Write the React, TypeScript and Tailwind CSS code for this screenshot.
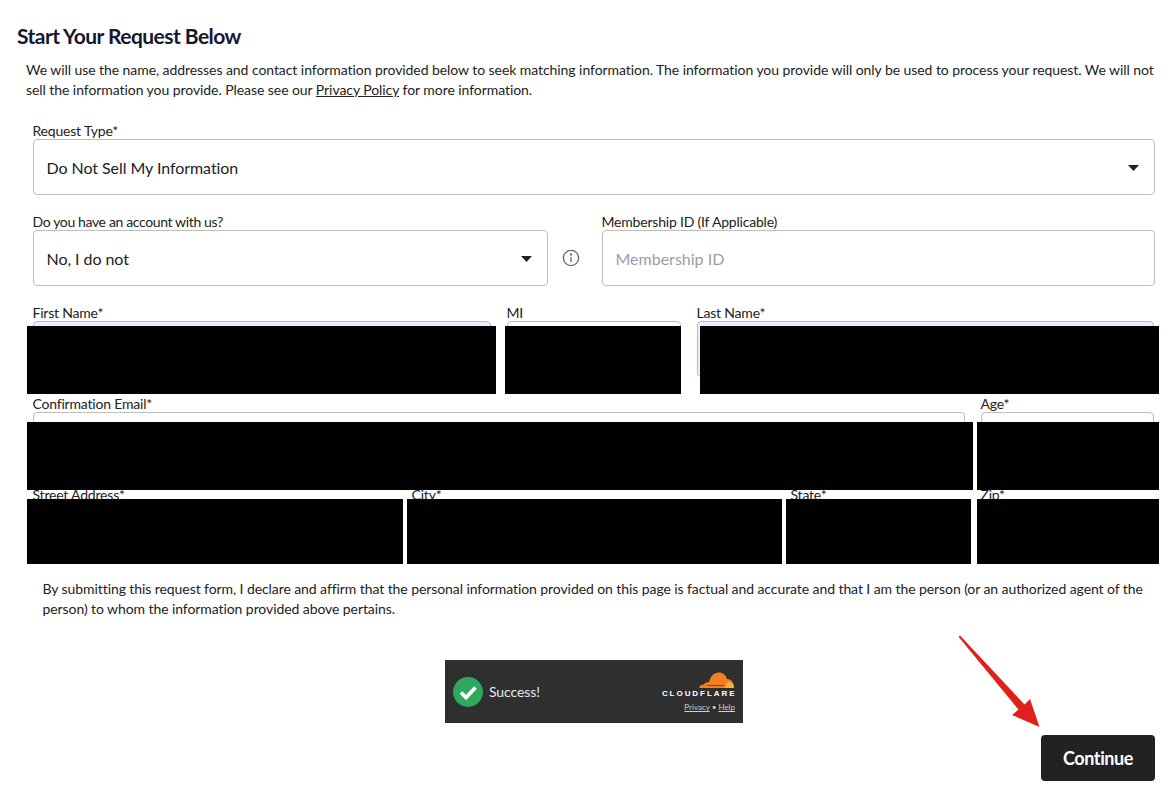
import React from "react";

const Caret = () => (
  <svg width="11" height="6" viewBox="0 0 11 6" className="shrink-0">
    <path d="M0 0H11L5.5 6Z" fill="#222" />
  </svg>
);

function Field({ label, className, value, placeholder, caret, autofill, labelClass = "tracking-[-0.2px]" }: { label: string; className: string; value?: string; placeholder?: string; caret?: boolean; autofill?: boolean; labelClass?: string }) {
  return (
    <div className={`flex flex-col ${className}`}>
      <label className={`-ml-[0.5px] h-[17px] text-[14px] leading-[17px] text-[#222] whitespace-nowrap ${labelClass}`}>{label}</label>
      <div className={`flex h-[56px] items-center justify-between rounded-[4px] border pl-[12.5px] pr-[15px] pt-[1px] text-[16px] ${autofill ? "border-[#a9bccb] bg-[#e8f0fe]" : "border-[#bdbdbd] bg-white"}`}>
        {value ? <span className="tracking-[-0.06px] text-[#222]">{value}</span> : <span className="text-[#9a9ea6]">{placeholder}</span>}
        {caret && <Caret />}
      </div>
    </div>
  );
}

const Mask = ({ className }: { className: string }) => <div className={`absolute bg-black ${className}`} />;

export default function App() {
  return (
    <div className="relative h-[803px] w-[1174px] overflow-hidden bg-white font-['Lato',sans-serif] text-[#222]">
      <div className="flex flex-col pl-[17px] pr-[19px] pt-[23px]">
        <h1 className="h-[26px] text-[21px] font-bold leading-[26px] tracking-[-0.55px] text-[#14192f]">Start Your Request Below</h1>
        <p className="ml-[9px] mt-[11px] text-[14px] leading-[20px] tracking-[-0.065px] text-[#222]">
          We will use the name, addresses and contact information provided below to seek matching information. The information you provide will only be used to process your request. We will not sell the information you provide. Please see our <span className="underline">Privacy Policy</span> for more information.
        </p>
        <div className="ml-[16px] mt-[22px] flex flex-col gap-[18px]">
          <Field label="Request Type*" className="w-full" value="Do Not Sell My Information" caret />
          <div className="flex">
            <Field label="Do you have an account with us?" labelClass="tracking-[-0.36px]" className="w-[515px]" value="No, I do not" caret />
            <div className="flex w-[54px] items-center justify-start pl-[14px] pt-[17px]">
              <svg width="18" height="18" viewBox="0 0 18 18" fill="none" stroke="#6b6b6b" strokeWidth="1.4">
                <circle cx="9" cy="9" r="7.6" />
                <path d="M9 8.2V13" />
                <circle cx="9" cy="5.5" r="0.5" fill="#6b6b6b" />
              </svg>
            </div>
            <Field label="Membership ID (If Applicable)" className="flex-1" placeholder="Membership ID" />
          </div>
          <div className="flex gap-[16px]">
            <Field label="First Name*" className="w-[458px]" autofill value=" " />
            <Field label="MI" className="w-[174px]" value=" " />
            <Field label="Last Name*" className="w-[457px]" autofill value=" " />
          </div>
          <div className="flex gap-[16px]">
            <Field label="Confirmation Email*" className="w-[932px]" value=" " />
            <Field label="Age*" className="w-[173px]" value=" " />
          </div>
          <div className="flex gap-[16px]">
            <Field label="Street Address*" className="w-[363px]" value=" " />
            <Field label="City*" className="w-[363px]" value=" " />
            <Field label="State*" className="w-[174px]" value=" " />
            <Field label="Zip*" className="w-[173px]" value=" " />
          </div>
        </div>
        <p className="ml-[25.5px] mt-[20px] text-[14px] leading-[20px] tracking-[-0.08px] text-[#222]">
          By submitting this request form, I declare and affirm that the personal information provided on this page is factual and accurate and that I am the person (or an authorized agent of the person) to whom the information provided above pertains.
        </p>
        <div className="ml-[428px] mt-[41px] flex h-[63px] w-[298px] items-center justify-between bg-[#2f2f2f] pl-[8px] pr-[8px]">
          <div className="flex items-center gap-[6px]">
            <svg width="30" height="30" viewBox="0 0 30 30">
              <circle cx="15" cy="15" r="15" fill="#2ea85c" />
              <path d="M8 15.5L13 20.5L22.5 10.5" fill="none" stroke="#fff" strokeWidth="3.8" />
            </svg>
            <span className="text-[14px] tracking-[-0.1px] text-[#e8e8e8]">Success!</span>
          </div>
          <div className="flex flex-col items-end">
            <svg width="37" height="18" viewBox="0 0 37 18">
              <path d="M1 17C1.5 14.5 3.5 13.5 6 13.5C7 11.5 9 11 11 11.5C12.5 5 16 1.5 20.5 1.5C25 1.5 28 4 29 8C33 8 36 11 36 17Z" fill="#f38020" />
              <path d="M27 17C27.5 14 29 11.5 31 10.5C34 11.5 36 14 36 17Z" fill="#fbad41" />
              <path d="M9 14.5H26" stroke="#2f2f2f" strokeWidth="0.7" />
            </svg>
            <span className="mt-[0px] text-[8px] font-black leading-[10px] tracking-[1.95px] mr-[-1.5px] text-white font-['Liberation_Sans',sans-serif]">CLOUDFLARE</span>
            <span className="mt-[3px] text-[8px] leading-[10px] text-[#d0d0d0] tracking-[0px]"><span className="underline">Privacy</span> • <span className="underline">Help</span></span>
          </div>
        </div>
        <div className="mt-[12px] flex justify-end">
          <button className="h-[46px] w-[114px] rounded-[4px] bg-[#222222] text-[18px] font-bold tracking-[-0.4px] text-white">Continue</button>
        </div>
      </div>

      <Mask className="left-[27px] top-[326px] h-[68px] w-[469px]" />
      <Mask className="left-[505px] top-[326px] h-[68px] w-[176px]" />
      <Mask className="left-[700px] top-[326px] h-[68px] w-[459px]" />
      <Mask className="left-[27px] top-[422px] h-[68px] w-[946px]" />
      <Mask className="left-[977px] top-[422px] h-[68px] w-[182px]" />
      <Mask className="left-[27px] top-[499px] h-[65px] w-[376px]" />
      <Mask className="left-[407px] top-[499px] h-[65px] w-[375px]" />
      <Mask className="left-[786px] top-[499px] h-[65px] w-[185px]" />
      <Mask className="left-[977px] top-[499px] h-[65px] w-[182px]" />

      <svg className="absolute left-[950px] top-[630px]" width="100" height="105" viewBox="950 630 100 105">
        <path d="M958.5 636.8L960 635.5L1024.5 704.5L1030 699L1039.5 727L1012 715L1018.5 709.5Z" fill="#e0201b" />
      </svg>
    </div>
  );
}
